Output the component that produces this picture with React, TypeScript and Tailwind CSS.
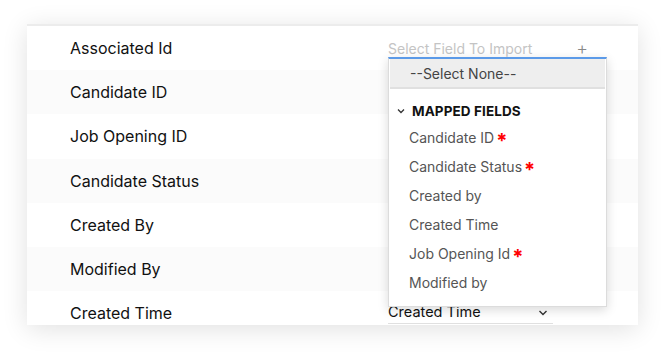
import React from "react";

const labels = [
  "Associated Id",
  "Candidate ID",
  "Job Opening ID",
  "Candidate Status",
  "Created By",
  "Modified By",
  "Created Time",
];

const items: { t: string; req?: boolean }[] = [
  { t: "Candidate ID", req: true },
  { t: "Candidate Status", req: true },
  { t: "Created by" },
  { t: "Created Time" },
  { t: "Job Opening Id", req: true },
  { t: "Modified by" },
];

export default function App() {
  return (
    <div
      className="w-[664px] h-[353px] bg-white pt-[24px] pl-[27px] overflow-hidden"
      style={{ fontFamily: "Inter, 'Noto Sans', sans-serif" }}
    >
      <div className="relative w-[611px] h-[301px] bg-white border-t-[2px] border-[#ececec] shadow-[0_4px_24px_rgba(0,0,0,0.12)] overflow-hidden">
        <div className="flex flex-col">
          {labels.map((l, i) => (
            <div
              key={l}
              className={`h-[44.2px] shrink-0 flex items-center pl-[43px] text-[16px] text-[#111] ${
                i % 2 === 1 ? "bg-[#fbfbfb]" : "bg-white"
              }`}
            >
              <span className="w-[318px]">{l}</span>
              {i === 0 && (
                <div className="flex items-center w-[218px] justify-between">
                  <span className="text-[14px] text-[#c4c4c4]">Select Field To Import</span>
                  <span className="text-[18px] text-[#888] font-light mr-[18px] mt-[1px]">+</span>
                </div>
              )}
              {i === 6 && (
                <div className="flex items-center w-[165px] justify-between border-b border-[#e0e0e0] h-[22px] mb-[1px]">
                  <span className="text-[14.5px] text-[#111]">Created Time</span>
                  <svg width="10" height="6" viewBox="0 0 10 6" className="mr-[5px] mt-[2px]">
                    <path d="M1.5 1l3.5 3.5L8.5 1" fill="none" stroke="#333" strokeWidth="1.4" />
                  </svg>
                </div>
              )}
            </div>
          ))}
        </div>

        <div className="absolute left-[361px] top-[31px] w-[219px] bg-white border border-[#dcdcdc] border-t-2 border-t-[#5b9ae8] shadow-[0_3px_10px_rgba(0,0,0,0.15)] pb-[9px]">
          <div className="h-[30px] bg-[#eeeeee] border-b-2 border-[#e0e0e0] flex items-center pl-[20px] text-[14px] text-[#444] mx-[1px]">
            --Select None--
          </div>
          <div className="flex items-center h-[22px] mt-[11px] pl-[8px] text-[13.5px] font-bold text-[#111] tracking-[0.1px]">
            <svg width="8" height="6" viewBox="0 0 8 6" className="mr-[7px]">
              <path d="M1 1.5l3 3 3-3" fill="none" stroke="#333" strokeWidth="1.3" />
            </svg>
            MAPPED FIELDS
          </div>
          <div className="mt-[1px]">
            {items.map((it) => (
              <div key={it.t} className="h-[29px] flex items-center pl-[20px] text-[14px] text-[#555]">
                {it.t}
                {it.req && <span className="text-[#f00] ml-[2px] text-[20px] font-bold leading-none mt-[7px]">*</span>}
              </div>
            ))}
          </div>
        </div>
      </div>
    </div>
  );
}
